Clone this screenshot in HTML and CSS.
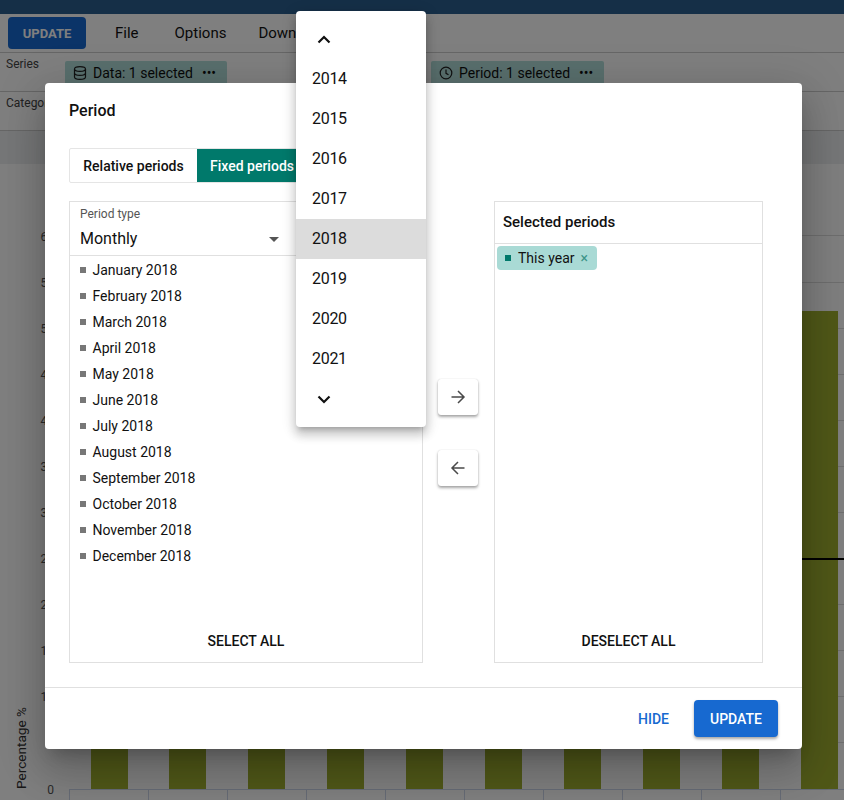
FILE: index.html
```html
<!DOCTYPE html>
<html lang="en">
<head>
    <meta charset="UTF-8">
    <title>Data Visualizer</title>
    <link rel="stylesheet" href="styles.css">
</head>
<body>
    <div class="app">
        <div class="header-bar"></div>
        <div class="toolbar">
            <button class="toolbar-update">UPDATE</button>
            <span class="toolbar-item toolbar-item-file">File</span>
            <span class="toolbar-item">Options</span>
            <span class="toolbar-item">Download</span>
        </div>
        <div class="layout-row">
            <span class="layout-label">Series</span>
            <span class="dim-chip dim-chip-data">
                <svg width="16" height="16" viewBox="0 0 16 16" fill="none" stroke="#222" stroke-width="1.2">
                    <ellipse cx="8" cy="4" rx="5.5" ry="2.4"/>
                    <path d="M2.5 4v8c0 1.3 2.5 2.4 5.5 2.4s5.500-1.100 5.500-2.400V4"/>
                    <path d="M2.500 8c0 1.300 2.500 2.400 5.500 2.400s5.500-1.100 5.500-2.400"/>
                </svg>
                Data: 1 selected
                <span class="dots">•••</span>
            </span>
            <span class="dim-chip dim-chip-period">
                <svg width="16" height="16" viewBox="0 0 16 16" fill="none" stroke="#222" stroke-width="1.200">
                    <circle cx="8" cy="8" r="5.800"/>
                    <path d="M8 4.500V8.300l2.500 1.500"/>
                </svg>
                Period: 1 selected
                <span class="dots">•••</span>
            </span>
        </div>
        <div class="layout-row layout-row-second">
            <span class="layout-label">Category</span>
        </div>
        <div class="title-band"></div>
        <svg class="chart" width="844" height="636" viewBox="0 164 844 636">
            <g stroke="#dcdcdc" stroke-width="1">
                <line x1="69" x2="844" y1="235.500" y2="235.500"/>
                <line x1="69" x2="844" y1="282.500" y2="282.500"/>
                <line x1="69" x2="844" y1="328.500" y2="328.500"/>
                <line x1="69" x2="844" y1="374.500" y2="374.500"/>
                <line x1="69" x2="844" y1="420.500" y2="420.500"/>
                <line x1="69" x2="844" y1="466.500" y2="466.500"/>
                <line x1="69" x2="844" y1="512.500" y2="512.500"/>
                <line x1="69" x2="844" y1="604.500" y2="604.500"/>
                <line x1="69" x2="844" y1="650.500" y2="650.500"/>
                <line x1="69" x2="844" y1="696.500" y2="696.500"/>
                <line x1="69" x2="844" y1="742.500" y2="742.500"/>
            </g>
            <g fill="#a0b030">
                <rect x="91" y="600" width="37" height="189"/>
                <rect x="169" y="600" width="37" height="189"/>
                <rect x="248" y="600" width="37" height="189"/>
                <rect x="327" y="600" width="37" height="189"/>
                <rect x="406" y="600" width="37" height="189"/>
                <rect x="485" y="600" width="37" height="189"/>
                <rect x="564" y="600" width="37" height="189"/>
                <rect x="643" y="600" width="37" height="189"/>
                <rect x="722" y="600" width="37" height="189"/>
                <rect x="801" y="311" width="37" height="478"/>
            </g>
            <line x1="69" x2="844" y1="559" y2="559" stroke="#000" stroke-width="2"/>
            <g stroke="#ccd6eb">
                <line x1="69" x2="844" y1="789.500" y2="789.500"/>
                <line x1="69.500" x2="69.500" y1="789" y2="800"/>
                <line x1="148.500" x2="148.500" y1="789" y2="800"/>
                <line x1="227.500" x2="227.500" y1="789" y2="800"/>
                <line x1="306.500" x2="306.500" y1="789" y2="800"/>
                <line x1="385.500" x2="385.500" y1="789" y2="800"/>
                <line x1="464.500" x2="464.500" y1="789" y2="800"/>
                <line x1="543.500" x2="543.500" y1="789" y2="800"/>
                <line x1="622.500" x2="622.500" y1="789" y2="800"/>
                <line x1="701.500" x2="701.500" y1="789" y2="800"/>
                <line x1="780.500" x2="780.500" y1="789" y2="800"/>
            </g>
            <g class="axis-label" text-anchor="end">
                <text x="54" y="241">60</text>
                <text x="54" y="287">55</text>
                <text x="54" y="333">50</text>
                <text x="54" y="379">45</text>
                <text x="54" y="425">40</text>
                <text x="54" y="471">35</text>
                <text x="54" y="517">30</text>
                <text x="54" y="563">25</text>
                <text x="54" y="609">20</text>
                <text x="54" y="655">15</text>
                <text x="54" y="701">10</text>
                <text x="54" y="747">5</text>
                <text x="54" y="794">0</text>
            </g>
            <text class="axis-title" transform="translate(26 789) rotate(-90)">Percentage %</text>
        </svg>
    </div>

    <div class="backdrop"></div>

    <div class="modal">
        <h2 class="modal-title">Period</h2>
        <div class="tabs">
            <span class="tab">Relative periods</span>
            <span class="tab tab-active">Fixed periods</span>
        </div>
        <div class="transfer">
            <div class="panel panel-left">
                <div class="period-type">
                    <span class="period-type-label">Period type</span>
                    <div class="period-type-value">
                        Monthly
                        <span class="caret"></span>
                    </div>
                </div>
                <ul class="period-list">
                    <li>January 2018</li>
                    <li>February 2018</li>
                    <li>March 2018</li>
                    <li>April 2018</li>
                    <li>May 2018</li>
                    <li>June 2018</li>
                    <li>July 2018</li>
                    <li>August 2018</li>
                    <li>September 2018</li>
                    <li>October 2018</li>
                    <li>November 2018</li>
                    <li>December 2018</li>
                </ul>
                <div class="panel-action">SELECT ALL</div>
            </div>
            <div class="arrows">
                <button class="arrow-button">
                    <svg width="18" height="18" viewBox="0 0 18 18" fill="none" stroke="#4a4a4a" stroke-width="1.500">
                        <path d="M2.500 9h12.500M9 3 15 9 9 15"/>
                    </svg>
                </button>
                <button class="arrow-button">
                    <svg width="18" height="18" viewBox="0 0 18 18" fill="none" stroke="#4a4a4a" stroke-width="1.500">
                        <path d="M15.500 9H3M9 3 3 9 9 15"/>
                    </svg>
                </button>
            </div>
            <div class="panel panel-right">
                <div class="panel-heading">Selected periods</div>
                <div class="selected-list">
                    <span class="selected-chip">
                        <span class="selected-chip-mark"></span>
                        This year
                        <span class="selected-chip-x">×</span>
                    </span>
                </div>
                <div class="panel-action">DESELECT ALL</div>
            </div>
        </div>
        <div class="modal-footer">
            <button class="hide-button">HIDE</button>
            <button class="update-button">UPDATE</button>
        </div>
    </div>

    <div class="year-menu">
        <div class="year-arrow">
            <svg width="14" height="9" viewBox="0 0 14 9" fill="none" stroke="#111" stroke-width="2.200"><path d="M1.500 7.500 7 2l5.500 5.500"/></svg>
        </div>
        <div class="year-item">2014</div>
        <div class="year-item">2015</div>
        <div class="year-item">2016</div>
        <div class="year-item">2017</div>
        <div class="year-item year-item-active">2018</div>
        <div class="year-item">2019</div>
        <div class="year-item">2020</div>
        <div class="year-item">2021</div>
        <div class="year-arrow">
            <svg width="14" height="9" viewBox="0 0 14 9" fill="none" stroke="#111" stroke-width="2.200"><path d="M1.500 1.500 7 7l5.500-5.500"/></svg>
        </div>
    </div>
</body>
</html>
```

FILE: styles.css
```css
* {
    box-sizing: border-box;
}

body {
    margin: 0;
    height: 800px;
    overflow: hidden;
    font-family: Roboto, "Liberation Sans", sans-serif;
    color: #111;
    background-color: #fff;
}

button {
    font-family: inherit;
    border: none;
    cursor: pointer;
}

.header-bar {
    height: 14px;
    background-color: #2a5f8e;
}

.toolbar {
    display: flex;
    align-items: center;
    height: 39px;
    padding-left: 8px;
    border-bottom: 1px solid #ccc;
}

.toolbar-update {
    width: 78px;
    height: 32px;
    margin-right: 29px;
    font-size: 13px;
    font-weight: 700;
    color: #fff;
    background-color: #1769d0;
    border-radius: 4px;
}

.toolbar-item {
    margin-right: 32px;
    font-size: 15px;
}

.toolbar-item-file {
    margin-right: 36px;
}

.layout-row {
    position: relative;
    display: flex;
    height: 39px;
    padding: 8px 0 0 65px;
    border-bottom: 1px solid #ccc;
}

.layout-label {
    position: absolute;
    left: 6px;
    top: 4px;
    font-size: 12px;
    color: #444;
}

.dim-chip {
    display: flex;
    align-items: center;
    gap: 5px;
    height: 24px;
    padding: 0 8px 0 7px;
    font-size: 14px;
    background-color: #b2dfdb;
    border-radius: 2px;
}

.dim-chip-data {
    width: 162px;
}

.dim-chip-period {
    width: 173px;
    margin-left: 204px;
}

.dots {
    margin-left: 4px;
    font-size: 14px;
    line-height: 14px;
}

.title-band {
    height: 33px;
    background-color: #eceef0;
}

.chart {
    display: block;
}

.axis-label {
    font-size: 12px;
    fill: #555;
}

.axis-title {
    font-size: 13.600px;
    fill: #333;
}

.backdrop {
    position: absolute;
    inset: 0;
    background-color: rgba(0, 0, 0, 0.5);
}

.modal {
    position: absolute;
    left: 45px;
    top: 83px;
    display: flex;
    flex-direction: column;
    width: 757px;
    height: 666px;
    background-color: #fff;
    border-radius: 4px;
    box-shadow: 0 11px 15px -7px rgba(0, 0, 0, 0.2), 0 24px 38px 3px rgba(0, 0, 0, 0.14), 0 9px 46px 8px rgba(0, 0, 0, 0.12);
}

.modal-title {
    margin: 0;
    padding: 18px 24px 0;
    height: 65px;
    font-size: 16px;
    line-height: 19px;
    font-weight: 500;
}

.tabs {
    display: flex;
    width: 300px;
    height: 35px;
    margin-left: 24px;
    border: 1px solid #e5e5e5;
    border-radius: 2px;
}

.tab {
    display: flex;
    align-items: center;
    justify-content: center;
    width: 127px;
    font-size: 14px;
    font-weight: 500;
}

.tab-active {
    flex: 1;
    justify-content: flex-start;
    padding-left: 13px;
    color: #fff;
    background-color: #00796b;
}

.transfer {
    display: flex;
    height: 462px;
    margin: 18px 0 0 24px;
}

.panel {
    display: flex;
    flex-direction: column;
    border: 1px solid #e0e0e0;
}

.panel-left {
    width: 354px;
}

.panel-right {
    width: 269px;
}

.period-type {
    height: 54px;
    padding: 5px 10px 0;
    border-bottom: 1px solid #e0e0e0;
}

.period-type-label {
    display: block;
    font-size: 12px;
    line-height: 14px;
    color: #555;
}

.period-type-value {
    display: flex;
    align-items: center;
    justify-content: space-between;
    margin-top: 8px;
    width: 199px;
    font-size: 16px;
    line-height: 20px;
}

.caret {
    width: 0;
    height: 0;
    border-left: 5px solid transparent;
    border-right: 5px solid transparent;
    border-top: 5px solid #555;
}

.period-list {
    flex: 1;
    margin: 0;
    padding: 1px 0 0;
    list-style: none;
}

.period-list li {
    display: flex;
    align-items: center;
    height: 26px;
    padding-left: 10px;
    font-size: 14px;
}

.period-list li::before {
    content: "";
    width: 6px;
    height: 6px;
    margin-right: 6.500px;
    background-color: #777;
}

.panel-action {
    height: 32px;
    text-align: center;
    font-size: 14px;
    font-weight: 500;
    line-height: 16px;
    padding-top: 3px;
}

.arrows {
    display: flex;
    flex-direction: column;
    gap: 35px;
    width: 71px;
    padding: 178px 0 0 15px;
}

.arrow-button {
    display: flex;
    align-items: center;
    justify-content: center;
    width: 40px;
    height: 36px;
    padding: 0;
    background-color: #fff;
    border-radius: 3px;
    box-shadow: 0 2px 3px rgba(0, 0, 0, 0.35), 0 0 1px rgba(0, 0, 0, 0.2);
}

.panel-heading {
    height: 42px;
    padding-left: 8px;
    font-size: 15px;
    font-weight: 500;
    line-height: 40px;
    border-bottom: 1px solid #e0e0e0;
}

.selected-list {
    flex: 1;
    padding: 2px;
}

.selected-chip {
    display: inline-flex;
    align-items: center;
    height: 24px;
    width: 100px;
    padding-left: 8px;
    font-size: 14px;
    background-color: #a9dad5;
    border-radius: 4px;
}

.selected-chip-mark {
    width: 6px;
    height: 6px;
    margin-right: 7px;
    background-color: #00796b;
}

.selected-chip-x {
    margin-left: 6px;
    font-size: 14px;
    color: #3d9488;
}

.modal-footer {
    display: flex;
    align-items: center;
    justify-content: flex-end;
    gap: 25px;
    height: 62px;
    margin-top: 24px;
    padding-right: 24px;
    border-top: 1px solid #e0e0e0;
}

.hide-button {
    font-size: 14px;
    font-weight: 500;
    color: #1769d0;
    background: none;
    padding: 0;
}

.update-button {
    width: 84px;
    height: 37px;
    font-size: 14px;
    font-weight: 500;
    color: #fff;
    background-color: #1769d0;
    border-radius: 4px;
    box-shadow: 0 2px 3px rgba(0, 0, 0, 0.35);
}

.year-menu {
    position: absolute;
    left: 296px;
    top: 11px;
    width: 130px;
    background-color: #fff;
    border-radius: 4px;
    box-shadow: 0 5px 5px -3px rgba(0, 0, 0, 0.2), 0 8px 10px 1px rgba(0, 0, 0, 0.14), 0 3px 14px 2px rgba(0, 0, 0, 0.12);
    padding: 8px 0;
}

.year-arrow {
    display: flex;
    align-items: center;
    height: 40px;
    padding-left: 21px;
}

.year-item {
    height: 40px;
    padding-left: 16px;
    font-size: 16px;
    letter-spacing: -0.3px;
    line-height: 40px;
}

.year-item-active {
    background-color: #dcdcdc;
}
```
